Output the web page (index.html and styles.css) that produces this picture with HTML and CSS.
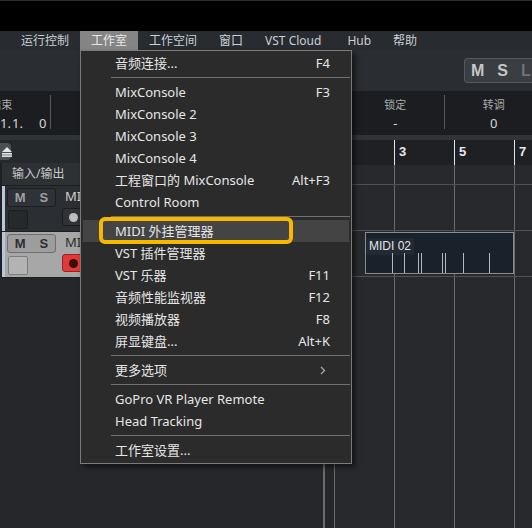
FILE: index.html
```html
<!DOCTYPE html>
<html lang="zh-CN">
<head>
  <meta charset="UTF-8">
  <title>工作室菜单</title>
  <link rel="stylesheet" href="styles.css">
</head>
<body>

<div class="titlebar"></div>

<div class="menubar">
  <span class="mb-item">运行控制</span>
  <span class="mb-item active">工作室</span>
  <span class="mb-item">工作空间</span>
  <span class="mb-item">窗口</span>
  <span class="mb-item wide">VST Cloud</span>
  <span class="mb-item">Hub</span>
  <span class="mb-item">帮助</span>
</div>

<div class="toolbar">
  <div class="msl">
    <span>M</span><span>S</span><span class="dim">L</span>
  </div>
</div>

<div class="transport">
  <div class="cell first">
    <div class="lbl">结束</div>
    <div class="val pos"><span>1.</span><span>1.</span><span>1.</span><span class="ticks">0</span></div>
  </div>
  <div class="cell"><div class="lbl"></div><div class="val"></div></div>
  <div class="cell"><div class="lbl"></div><div class="val"></div></div>
  <div class="cell"><div class="lbl"></div><div class="val"></div></div>
  <div class="cell"><div class="lbl">锁定</div><div class="val">-</div></div>
  <div class="cell"><div class="lbl">转调</div><div class="val">0</div></div>
</div>

<div class="strip"></div>

<div class="workspace">
  <div class="tracklist">
    <div class="tl-toolbar">
      <span class="tl-btn">
        <svg width="12" height="12" viewBox="0 0 12 12"><path d="M1 7 L6 2 L11 7 Z" fill="#e6e6e6"/><rect x="1" y="8" width="10" height="1.6" fill="#e6e6e6"/><rect x="1" y="10.3" width="10" height="1.6" fill="#e6e6e6"/></svg>
      </span>
    </div>
    <div class="tl-header">输入/输出</div>
    <div class="track">
      <div class="edge"></div>
      <div class="track-body">
        <div class="col-a">
          <div class="ms"><span>M</span><span>S</span></div>
          <div class="sq"></div>
        </div>
        <div class="col-b">
          <div class="name">MIDI 01</div>
          <div class="rec"><span class="dot"></span></div>
        </div>
      </div>
    </div>
    <div class="track selected">
      <div class="edge"></div>
      <div class="track-body">
        <div class="col-a">
          <div class="ms"><span>M</span><span>S</span></div>
          <div class="sq"></div>
        </div>
        <div class="col-b">
          <div class="name">MIDI 02</div>
          <div class="rec on"><span class="dot"></span></div>
        </div>
      </div>
    </div>
  </div>
  <div class="splitter"></div>
  <div class="spacer"></div>
  <div class="arrange">
    <div class="ruler">
      <span class="bar">1</span><span class="bar">3</span><span class="bar">5</span><span class="bar">7</span>
    </div>
    <div class="lane lane-head"></div>
    <div class="lane"></div>
    <div class="lane">
      <div class="part">
        <span class="part-name">MIDI 02</span>
        <div class="notes">
          <i style="left:26px"></i><i style="left:38px"></i><i style="left:52px"></i><i style="left:55px"></i>
          <i style="left:76px"></i><i style="left:79px"></i><i style="left:97px"></i><i style="left:123px"></i>
        </div>
      </div>
    </div>
  </div>
</div>

<div class="menu">
  <div class="item"><span>音频连接...</span><span class="key">F4</span></div>
  <div class="sep"></div>
  <div class="item"><span>MixConsole</span><span class="key">F3</span></div>
  <div class="item"><span>MixConsole 2</span></div>
  <div class="item"><span>MixConsole 3</span></div>
  <div class="item"><span>MixConsole 4</span></div>
  <div class="item"><span>工程窗口的 MixConsole</span><span class="key">Alt+F3</span></div>
  <div class="item"><span>Control Room</span></div>
  <div class="sep"></div>
  <div class="item current"><span>MIDI 外挂管理器</span></div>
  <div class="item"><span>VST 插件管理器</span></div>
  <div class="item"><span>VST 乐器</span><span class="key">F11</span></div>
  <div class="item"><span>音频性能监视器</span><span class="key">F12</span></div>
  <div class="item"><span>视频播放器</span><span class="key">F8</span></div>
  <div class="item"><span>屏显键盘...</span><span class="key">Alt+K</span></div>
  <div class="sep"></div>
  <div class="item"><span>更多选项</span>
    <svg class="arrow" width="6" height="9" viewBox="0 0 6 9"><path d="M1 1 L4.5 4.5 L1 8" fill="none" stroke="#a8a8a8" stroke-width="1.3"/></svg>
  </div>
  <div class="sep"></div>
  <div class="item"><span>GoPro VR Player Remote</span></div>
  <div class="item"><span>Head Tracking</span></div>
  <div class="sep"></div>
  <div class="item"><span>工作室设置...</span></div>
</div>

</body>
</html>
```

FILE: styles.css
```css
* { box-sizing: border-box; }
body { margin: 0; background: #25272a; font-family: "Noto Sans", "Noto Sans CJK SC", sans-serif; color: #ddd; position: relative; height: 528px; overflow: hidden; }

.titlebar { height: 31px; background: #000; border-top: 1px solid #2c2c2c; }

.menubar { height: 19px; display: flex; padding-left: 10px; background: #282b2f; font-size: 12px; line-height: 19px; color: #c9d0d8; }
.mb-item { padding: 0 11px; white-space: nowrap; }
.mb-item.wide { padding-right: 15px; }
.mb-item.active { background: #858585; color: #e8e8e8; }

.toolbar { height: 41px; background: #2a2d31; display: flex; justify-content: flex-end; align-items: flex-start; }
.msl { margin-top: 8px; height: 25px; width: 68px; border: 1px solid #55585c; border-right: 0; border-radius: 4px 0 0 4px; background: #3a3d41; display: flex; align-items: center; gap: 13px; padding-left: 6px; font-family: "Liberation Sans", sans-serif; font-weight: bold; font-size: 16px; color: #c6c6c6; }
.msl .dim { color: #707275; }

.transport { height: 44px; background: #1b1d20; display: flex; margin-left: -48px; }
.cell { width: 98.5px; flex: none; display: flex; flex-direction: column; align-items: center; position: relative; }
.cell::after { content: ""; position: absolute; right: 0; top: 4px; bottom: 6px; width: 1px; background: #55585b; }
.lbl { font-size: 11px; color: #a9abad; height: 14px; margin-top: 5px; }
.val { font-size: 13px; color: #d6d6d6; margin-top: 4px; white-space: pre; }
.val.pos { align-self: flex-start; margin-left: 36px; display: flex; }
.val.pos span { width: 12px; flex: none; }
.val.pos .ticks { margin-left: 15px; }

.strip { height: 5px; background: #303337; }

.workspace { display: flex; height: 388px; }

.tracklist { width: 323px; flex: none; background: #25272a; }
.tl-toolbar { height: 23px; background: #26292c; }
.tl-btn { display: inline-flex; align-items: center; justify-content: flex-end; width: 11px; height: 17px; margin-top: 1px; background: #4b4e52; border-radius: 0 4px 4px 0; }
.tl-btn svg { margin-right: -2px; }
.tl-header { height: 23px; line-height: 22px; background: #2e3134; border-left: 2px solid #1e2023; border-bottom: 1px solid #1c1e20; padding-left: 10px; font-size: 12px; color: #c8c8c8; }

.track { display: flex; height: 46px; border-bottom: 1px solid #1c1e20; background: #2b2e32; }
.edge { width: 5px; flex: none; border-left: 2px solid #1e2023; background: #b9c6da; }
.track-body { display: flex; gap: 6px; padding: 2px 0 0 2px; }
.col-a { display: flex; flex-direction: column; gap: 3px; }
.ms { width: 49px; height: 19px; border: 1px solid #1b1d20; border-radius: 3px; background: #2f3236; display: flex; justify-content: space-around; align-items: center; font-family: "Liberation Sans", sans-serif; font-weight: bold; font-size: 13px; color: #9da0a4; }
.sq { width: 20px; height: 19px; margin-left: 1px; border: 1px solid #1b1d20; border-radius: 2px; background: #26292c; }
.col-b { display: flex; flex-direction: column; gap: 4px; }
.name { font-size: 13px; color: #cfcfcf; line-height: 16px; padding-left: 3px; white-space: nowrap; }
.rec { width: 26px; height: 18px; border: 1px solid #1b1d20; border-radius: 3px; background: #2f3236; display: flex; align-items: center; padding-left: 6px; }
.rec .dot { width: 9px; height: 9px; border-radius: 50%; background: #bdbdbd; }

.track.selected { background: #a7a7a7; }
.track.selected .ms { background: #9d9d9d; border-color: #6e6e6e; color: #2e2e2e; }
.track.selected .sq { background: #b3b3b3; border-color: #7d7d7d; }
.track.selected .name { color: #2a2a2a; }
.rec.on { background: #e23a37; border-color: #9b2220; }
.rec.on .dot { background: #3b0b0b; }

.splitter { width: 2px; flex: none; background: #6c6c6c; }
.spacer { width: 9px; flex: none; background: #25272a; }

.arrange { flex: 1; background-color: #28292c; background-image: repeating-linear-gradient(90deg, #6b6b6b 0 1px, transparent 1px 60px); }
.ruler { height: 25px; background: #1e2023; display: flex; }
.bar { width: 60px; flex: none; border-left: 1px solid #e2e2e2; padding: 4px 0 0 4px; font-family: "Liberation Sans", sans-serif; font-weight: bold; font-size: 13px; color: #eaeaea; }
.lane { height: 46px; border-bottom: 1px solid #4e5053; position: relative; }
.lane-head { height: 20px; }

.part { position: absolute; left: 31px; top: 1px; width: 149px; height: 42px; border: 1px solid #8a8c8e; background: #19212a; }
.part-name { display: inline-block; padding: 1px 3px 2px; background: #222a33; font-family: "Liberation Sans", sans-serif; font-size: 12px; color: #e4e6e8; }
.notes i { position: absolute; bottom: 0; width: 1px; height: 20px; background: #b4b8bc; }

.menu { position: absolute; left: 80px; top: 50px; width: 272px; border: 1px solid #7b7b7b; background: #2b2b2b; padding: 1px 0 2px; box-shadow: 3px 3px 5px rgba(0, 0, 0, 0.55); font-size: 13px; color: #e6e6e6; }
.item { height: 22px; line-height: 22px; margin: 0 2px; padding: 0 19px 0 32px; display: flex; justify-content: space-between; align-items: center; white-space: nowrap; position: relative; }
.item.current { background: #444; }
.item.current::after { content: ""; position: absolute; left: 16px; top: -3px; width: 186px; height: 19px; border: 4px solid #f6b800; border-radius: 6px; }
.key { color: #e6e6e6; }
.arrow { margin-right: 4px; }
.sep { height: 7px; position: relative; }
.sep::before { content: ""; position: absolute; left: 30px; right: 1px; top: 3px; height: 1px; background: #707070; }
```
